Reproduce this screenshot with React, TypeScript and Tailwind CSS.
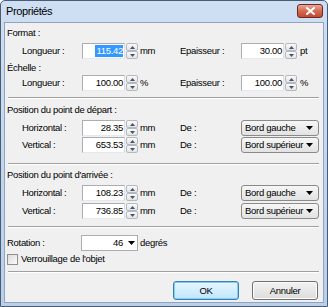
import React from "react";

const FONT = { fontFamily: '"Liberation Sans", Arial, sans-serif' };

function Up() {
  return (
    <svg width="5" height="3" viewBox="0 0 5 3">
      <path d="M2.5 0 L5 3 L0 3 Z" fill="#44546b" />
    </svg>
  );
}
function Down() {
  return (
    <svg width="5" height="3" viewBox="0 0 5 3">
      <path d="M0 0 L5 0 L2.5 3 Z" fill="#44546b" />
    </svg>
  );
}
function Arrow() {
  return (
    <svg width="7" height="4" viewBox="0 0 7 4">
      <path d="M0 0 L7 0 L3.5 4 Z" fill="#000" />
    </svg>
  );
}

function Spinner() {
  return (
    <div className="flex flex-col w-[12px] h-[16px] ml-[1px]">
      <div className="h-[8px] border border-[#b4b8bf] rounded-[2px] bg-linear-to-b from-[#fafafa] to-[#e4e4e4] flex items-center justify-center">
        <Up />
      </div>
      <div className="h-[8px] border border-[#b4b8bf] rounded-[2px] bg-linear-to-b from-[#fafafa] to-[#e4e4e4] flex items-center justify-center">
        <Down />
      </div>
    </div>
  );
}

function NumInput({ value, selected }: { value: string; selected?: boolean }) {
  return (
    <div className="w-[43px] h-[16px] bg-white border border-[#abadb3] border-b-[#e3e9ef] border-r-[#dbdfe6] flex items-center justify-end pr-[1px]">
      {selected ? (
        <span className="bg-[#3399ff] text-white leading-[12px] pl-[1px]">{value}</span>
      ) : (
        <span className="leading-[12px]">{value}</span>
      )}
    </div>
  );
}

function Select({ value }: { value: string }) {
  return (
    <div className="w-[78px] h-[16px] rounded-[3px] border border-[#8a8a8a] bg-linear-to-b from-[#f6f6f6] to-[#e2e2e2] flex items-center justify-between pl-[3px] pr-[5px]">
      <span>{value}</span>
      <Arrow />
    </div>
  );
}

function Sep() {
  return (
    <div className="ml-[3px] w-[311px] h-[2px] border-t border-[#a0a0a0] border-b border-b-white" />
  );
}

function NumRow({
  label,
  value,
  unit,
  rlabel,
  rvalue,
  runit,
  selected,
  mt,
}: {
  label: string;
  value: string;
  unit: string;
  rlabel: string;
  rvalue: string;
  runit: string;
  selected?: boolean;
  mt: string;
}) {
  return (
    <div className={`flex items-center h-[16px] pl-[17px] ${mt}`}>
      <div className="w-[60px]">{label}</div>
      <NumInput value={value} selected={selected} />
      <Spinner />
      <div className="w-[40px] ml-[2px]">{unit}</div>
      <div className="w-[61px]">{rlabel}</div>
      <NumInput value={rvalue} />
      <Spinner />
      <div className="ml-[3px]">{runit}</div>
    </div>
  );
}

function PosRow({
  label,
  value,
  sel,
  mt,
}: {
  label: string;
  value: string;
  sel: string;
  mt: string;
}) {
  return (
    <div className={`flex items-center h-[16px] pl-[17px] ${mt}`}>
      <div className="w-[60px]">{label}</div>
      <NumInput value={value} />
      <Spinner />
      <div className="w-[40px] ml-[2px]">mm</div>
      <div className="w-[61px]">De :</div>
      <Select value={sel} />
    </div>
  );
}

export default function App() {
  return (
    <div
      className="w-[328px] h-[307px] flex flex-col border border-[#4b5c72] rounded-t-[5px] bg-linear-to-b from-[#cfdff3] to-[#b9cfea] text-black"
      style={FONT}
    >
      <div className="h-[21px] flex items-center justify-between pl-[5px] pr-[4px]">
        <span className="text-[11px] tracking-[-0.4px] leading-none">Propriétés</span>
        <div className="w-[26px] h-[14px] mt-[-2px] rounded-[3px] border border-[#6e2a20] bg-linear-to-b from-[#e8a899] via-[#d46a53] to-[#c24a30] flex items-center justify-center">
          <svg width="9" height="8" viewBox="0 0 9 8">
            <path d="M1 1 L8 7 M8 1 L1 7" stroke="#fff" strokeWidth="2" strokeLinecap="square" />
          </svg>
        </div>
      </div>
      <div className="mx-[3px] h-[281px] bg-[#f0f0f0] border border-[#8ea4c1] text-[9.5px] tracking-[-0.3px] leading-[14px] flex flex-col">
        <div className="pl-[2px] mt-[3px] h-[14px]">Format :</div>
        <NumRow
          mt="mt-[3px]"
          label="Longueur :"
          value="115.42"
          unit="mm"
          rlabel="Epaisseur :"
          rvalue="30.00"
          runit="pt"
          selected
        />
        <div className="pl-[2px] mt-[2px] h-[14px]">Échelle :</div>
        <NumRow
          mt="mt-[0px]"
          label="Longueur :"
          value="100.00"
          unit="%"
          rlabel="Epaisseur :"
          rvalue="100.00"
          runit="%"
        />
        <div className="mt-[6px]">
          <Sep />
        </div>
        <div className="pl-[2px] mt-[4px] h-[14px]">Position du point de départ :</div>
        <PosRow mt="mt-[3px]" label="Horizontal :" value="28.35" sel="Bord gauche" />
        <PosRow mt="mt-[1px]" label="Vertical :" value="653.53" sel="Bord supérieur" />
        <div className="mt-[10px]">
          <Sep />
        </div>
        <div className="pl-[2px] mt-[3px] h-[14px]">Position du point d'arrivée :</div>
        <PosRow mt="mt-[3px]" label="Horizontal :" value="108.23" sel="Bord gauche" />
        <PosRow mt="mt-[2px]" label="Vertical :" value="736.85" sel="Bord supérieur" />
        <div className="mt-[7px]">
          <Sep />
        </div>
        <div className="flex items-center h-[16px] mt-[7px] pl-[2px]">
          <div className="w-[74px]">Rotation :</div>
          <div className="w-[57px] h-[16px] bg-white border border-[#abadb3] flex items-center justify-end pr-[2px] gap-[5px]">
            <span>46</span>
            <Arrow />
          </div>
          <div className="ml-[2px]">degrés</div>
        </div>
        <div className="flex items-center h-[12px] mt-[2px] pl-[2px]">
          <div className="w-[11px] h-[11px] border border-[#8f8f8f] bg-linear-to-br from-[#dcdcdc] to-[#fbfbfb]" />
          <span className="ml-[3px]">Verrouillage de l'objet</span>
        </div>
        <div className="mt-[6px]">
          <Sep />
        </div>
        <div className="flex justify-end gap-[13px] pr-[5px] mt-[8px]">
          <div className="w-[66px] h-[19px] rounded-[3px] border border-[#3c7fb1] bg-linear-to-b from-[#eaf6fd] to-[#bee6fd] flex items-center justify-center shadow-[inset_0_0_0_1px_#7fd0f5]">
            OK
          </div>
          <div className="w-[66px] h-[19px] rounded-[3px] border border-[#707070] bg-linear-to-b from-[#f2f2f2] to-[#dddddd] flex items-center justify-center shadow-[inset_0_0_0_1px_#fcfcfc]">
            Annuler
          </div>
        </div>
      </div>
    </div>
  );
}
